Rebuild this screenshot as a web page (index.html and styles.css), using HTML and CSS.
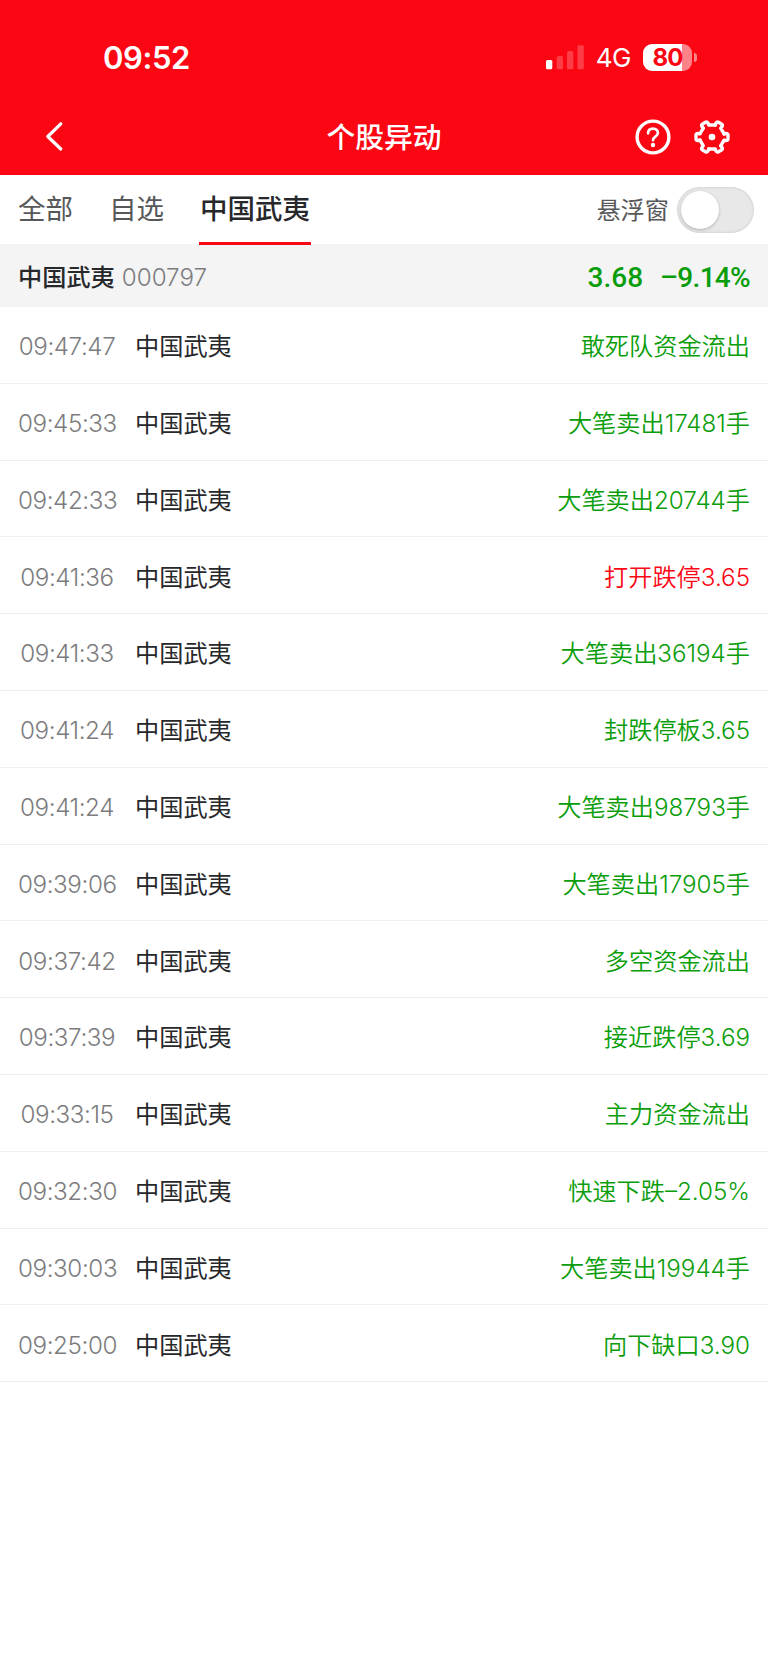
FILE: index.html
```html
<!DOCTYPE html>
<html lang="zh-CN">
<head>
    <meta charset="UTF-8">
    <meta name="viewport" content="width=device-width, initial-scale=1.0">
    <title>个股异动</title>
    <link rel="stylesheet" href="styles.css">
</head>
<body>
    <header class="header">
        <div class="status-bar">
            <span class="clock">09:52</span>
            <div class="status-right">
                <svg class="signal" width="38" height="25" viewBox="0 0 38 25" fill="#fff">
                    <rect x="0" y="15" width="6.3" height="9.3" rx="1.5"/>
                    <rect x="10.7" y="11" width="6.3" height="13.3" rx="1.5" opacity=".22"/>
                    <rect x="21" y="6" width="6.3" height="18.3" rx="1.5" opacity=".22"/>
                    <rect x="31.5" y="0.3" width="6.3" height="24" rx="1.5" opacity=".22"/>
                </svg>
                <span class="network">4G</span>
                <div class="battery"><span class="battery-level">80</span></div>
            </div>
        </div>
        <nav class="nav-bar">
            <svg class="back" width="20" height="32" viewBox="0 0 20 32" fill="none" stroke="#fff" stroke-width="3.2" stroke-linecap="round" stroke-linejoin="round">
                <path d="M16.8 2.8 3.8 15.5 16.8 28"/>
            </svg>
            <h1 class="title">个股异动</h1>
            <div class="nav-actions">
                <svg width="36" height="36" viewBox="0 0 36 36" fill="none" stroke="#fff" stroke-linecap="round">
                    <circle cx="18" cy="18" r="15.9" stroke-width="3.4"/>
                    <path d="M13.1 14.3C13.1 11.2 15.2 9.6 18 9.6s4.9 1.7 4.9 4.4c0 3.6-4.9 3.7-4.9 7.2" stroke-width="2.7"/>
                    <circle cx="18" cy="26" r="2.2" fill="#fff" stroke="none"/>
                </svg>
                <svg width="36" height="36" viewBox="-18 -18 36 36" fill="none" stroke="#fff" stroke-width="3.4" stroke-linecap="round" stroke-linejoin="round">
                    <defs>
                        <path id="tooth" d="M12.1-3.1 13.9-3.5Q16-3.4 16-1.7V1.7Q16 3.4 13.9 3.5L12.1 3.1 8.7 8.9"/>
                    </defs>
                    <use href="#tooth"/>
                    <use href="#tooth" transform="rotate(60)"/>
                    <use href="#tooth" transform="rotate(120)"/>
                    <use href="#tooth" transform="rotate(180)"/>
                    <use href="#tooth" transform="rotate(240)"/>
                    <use href="#tooth" transform="rotate(300)"/>
                    <circle r="3.3" fill="#fff" stroke="none"/>
                </svg>
            </div>
        </nav>
    </header>

    <div class="tabs">
        <a class="tab">全部</a>
        <a class="tab">自选</a>
        <a class="tab active">中国武夷</a>
        <div class="float-toggle">
            <span class="float-label">悬浮窗</span>
            <span class="switch"></span>
        </div>
    </div>

    <div class="stock">
        <span class="stock-name">中国武夷</span>
        <span class="stock-code">000797</span>
        <span class="stock-price">3.68</span>
        <span class="stock-change">–9.14%</span>
    </div>

    <ul class="events">
        <li><span class="time">09:47:47</span><span class="name">中国武夷</span><span class="event">敢死队资金流出</span></li>
        <li><span class="time">09:45:33</span><span class="name">中国武夷</span><span class="event">大笔卖出17481手</span></li>
        <li><span class="time">09:42:33</span><span class="name">中国武夷</span><span class="event">大笔卖出20744手</span></li>
        <li><span class="time">09:41:36</span><span class="name">中国武夷</span><span class="event up">打开跌停3.65</span></li>
        <li><span class="time">09:41:33</span><span class="name">中国武夷</span><span class="event">大笔卖出36194手</span></li>
        <li><span class="time">09:41:24</span><span class="name">中国武夷</span><span class="event">封跌停板3.65</span></li>
        <li><span class="time">09:41:24</span><span class="name">中国武夷</span><span class="event">大笔卖出98793手</span></li>
        <li><span class="time">09:39:06</span><span class="name">中国武夷</span><span class="event">大笔卖出17905手</span></li>
        <li><span class="time">09:37:42</span><span class="name">中国武夷</span><span class="event">多空资金流出</span></li>
        <li><span class="time">09:37:39</span><span class="name">中国武夷</span><span class="event">接近跌停3.69</span></li>
        <li><span class="time">09:33:15</span><span class="name">中国武夷</span><span class="event">主力资金流出</span></li>
        <li><span class="time">09:32:30</span><span class="name">中国武夷</span><span class="event">快速下跌–2.05%</span></li>
        <li><span class="time">09:30:03</span><span class="name">中国武夷</span><span class="event">大笔卖出19944手</span></li>
        <li><span class="time">09:25:00</span><span class="name">中国武夷</span><span class="event">向下缺口3.90</span></li>
    </ul>
</body>
</html>
```

FILE: styles.css
```css
:root {
    --red: #fb0714;
    --green: #0a9d0a;
    --dark: #27282b;
    --gray: #7c7c7e;
    --line: #eeeeef;
}

* {
    box-sizing: border-box;
    margin: 0;
    padding: 0;
}

body {
    font-family: Inter, "Noto Sans CJK SC", sans-serif;
    font-size: 24.2px;
    line-height: 1;
    color: var(--dark);
    background: #fff;
    min-height: 100vh;
}

.header {
    height: 175px;
    background: var(--red);
    color: #fff;
}

.status-bar {
    display: flex;
    justify-content: space-between;
    align-items: center;
    height: 99px;
    padding: 15px 71px 0 103px;
}

.clock {
    font-size: 31px;
    font-weight: 600;
    letter-spacing: -0.4px;
}

.status-right {
    display: flex;
    align-items: center;
}

.network {
    margin: 2px 12px 0 12px;
    font-size: 26px;
    letter-spacing: -0.5px;
}

.battery {
    position: relative;
    width: 49px;
    height: 27px;
    border-radius: 9px;
    background: linear-gradient(to right, #fff 39.5px, #fd8389 39.5px);
    margin-right: 5px;
}

.battery::after {
    content: "";
    position: absolute;
    left: 51px;
    top: 9px;
    width: 3px;
    height: 9px;
    border-radius: 0 4px 4px 0;
    background: #fd8389;
}

.battery-level {
    display: block;
    text-align: center;
    font-size: 24px;
    font-weight: 700;
    line-height: 27px;
    letter-spacing: -0.8px;
    color: var(--red);
}

.nav-bar {
    display: grid;
    grid-template-columns: 1fr auto 1fr;
    align-items: center;
    height: 76px;
    padding: 0 38px;
}

.back {
    margin-left: 6px;
}

.title {
    padding-top: 2px;
    font-size: 28.8px;
    font-weight: 500;
}

.nav-actions {
    display: flex;
    justify-content: flex-end;
    gap: 23px;
}

.tabs {
    display: flex;
    height: 69px;
    padding: 0 14px 0 18px;
}

.tab {
    height: 70px;
    padding-top: 21px;
    margin-right: 36px;
    font-size: 27.5px;
    color: #57585a;
}

.tab.active {
    margin-left: -1px;
    padding-left: 1px;
    padding-right: 1px;
    color: var(--dark);
    font-weight: 500;
    border-bottom: 3px solid var(--red);
}

.float-toggle {
    display: flex;
    align-items: center;
    gap: 8px;
    margin-left: auto;
    color: #57585a;
}

.float-label {
    padding-top: 3px;
}

.switch {
    width: 77px;
    height: 46px;
    padding: 4px;
    border-radius: 23px;
    background: #e8e8e8;
    box-shadow: inset 0 0 3px #c4c4c4;
}

.switch::before {
    content: "";
    display: block;
    width: 38px;
    height: 38px;
    border-radius: 50%;
    background: #fff;
    box-shadow: 0 1px 3px rgba(0, 0, 0, 0.25);
}

.stock {
    display: flex;
    align-items: center;
    height: 63px;
    padding: 5px 18px 0 18px;
    background: #f4f4f5;
}

.stock-name {
    font-weight: 500;
}

.stock-code {
    margin-left: 7px;
    font-weight: 300;
    color: var(--gray);
    letter-spacing: 0;
}

.stock-price,
.stock-change {
    font-family: Roboto, sans-serif;
    font-size: 28px;
    font-weight: 500;
    color: var(--green);
}

.stock-price {
    margin-left: auto;
}

.stock-change {
    margin-left: 17px;
    letter-spacing: -0.7px;
}

.events {
    list-style: none;
}

.events li {
    display: flex;
    align-items: center;
    height: 76.8px;
    padding: 5px 18px 0 18px;
    border-bottom: 1px solid var(--line);
}

.time {
    width: 98px;
    margin-right: 19px;
    text-align: center;
    white-space: nowrap;
    font-weight: 300;
    color: var(--gray);
    letter-spacing: -0.4px;
}

.event {
    margin-left: auto;
    color: var(--green);
    font-weight: 350;
}

.event.up {
    color: var(--red);
}
```
